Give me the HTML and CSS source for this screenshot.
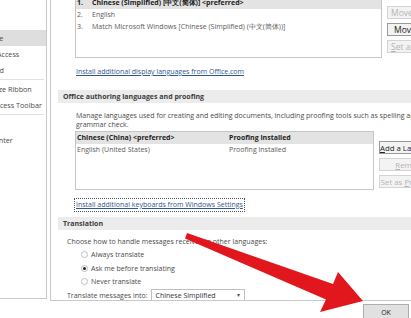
FILE: index.html
```html
<!DOCTYPE html>
<html lang="en">
<head>
  <meta charset="UTF-8">
  <meta name="viewport" content="width=device-width, initial-scale=1.0">
  <title>Word Options - Language</title>
  <link rel="stylesheet" href="styles.css">
</head>
<body>
  <div class="dialog">
    <div class="main">
      <nav class="sidebar">
        <ul class="nav-list">
          <li>Proofing</li>
          <li>Save</li>
          <li class="active">Language</li>
          <li>Ease of Access</li>
          <li>Advanced</li>
          <li class="sep"></li>
          <li>Customize Ribbon</li>
          <li>Quick Access Toolbar</li>
          <li class="sep"></li>
          <li>Add-ins</li>
          <li>Trust Center</li>
        </ul>
      </nav>

      <section class="panel">
        <div class="scroll">
          <!-- display languages -->
          <div class="lang-row">
            <div class="lang-list display-list">
              <div class="lang-item selected"><span class="num">1.</span>Chinese (Simplified) [中文(简体)] &lt;preferred&gt;</div>
              <div class="lang-item"><span class="num">2.</span>English</div>
              <div class="lang-item"><span class="num">3.</span>Match Microsoft Windows [Chinese (Simplified) (中文(简体))]</div>
            </div>
            <div class="side-buttons top-buttons">
              <button class="btn" disabled>Move Up</button>
              <button class="btn">Move Down</button>
              <button class="btn" disabled><u>S</u>et as Preferred</button>
            </div>
          </div>
          <a class="link link-office" href="#">Install additional display languages from Office.com</a>

          <!-- authoring languages -->
          <div class="band band-authoring">Office authoring languages and proofing</div>
          <p class="note">Manage languages used for creating and editing documents, including proofing tools such as spelling and<br>grammar check.</p>
          <div class="lang-row">
            <div class="lang-list authoring-list">
              <div class="lang-item selected"><span class="col-lang">Chinese (China) &lt;preferred&gt;</span>Proofing installed</div>
              <div class="lang-item"><span class="col-lang">English (United States)</span>Proofing installed</div>
            </div>
            <div class="side-buttons auth-buttons">
              <button class="btn"><u>A</u>dd a Language...</button>
              <button class="btn" disabled><u>R</u>emove</button>
              <button class="btn" disabled>Set as <u>P</u>referred</button>
            </div>
          </div>
          <a class="link link-keyboards" href="#">Install additional keyboards from Windows Settings</a>

          <!-- translation -->
          <div class="band band-translation">Translation</div>
          <p class="choose">Choose how to handle messages received in other languages:</p>
          <div class="radios">
            <label class="radio"><span class="dot"></span>Always translate</label>
            <label class="radio"><span class="dot checked"></span>Ask me before translating</label>
            <label class="radio"><span class="dot"></span>Never translate</label>
          </div>
          <div class="translate-into">
            <span>Translate messages into:</span>
            <div class="select">Chinese Simplified<span class="caret">▾</span></div>
          </div>
        </div>
      </section>
    </div>

    <div class="footer">
      <button class="btn-ok">OK</button>
    </div>

    <svg class="arrow" width="411" height="318" viewBox="0 0 411 318">
      <polygon points="187,233 333,284 338,272 363,301 320,312 326,299.5 185,238.5" fill="#e2171d"/>
    </svg>
  </div>
</body>
</html>
```

FILE: styles.css
```css
* {
  box-sizing: border-box;
}
body {
  margin: 0;
  width: 411px;
  height: 318px;
  overflow: hidden;
  background-color: #fff;
  font-family: "Open Sans", "Noto Sans", sans-serif;
  font-size: 7px;
  color: #4b4b4b;
}
.dialog {
  position: relative;
  width: 411px;
  height: 318px;
}
.main {
  display: flex;
  height: 301px;
}

/* left nav */
.sidebar {
  width: 47px;
  height: 299px;
  border-right: 1px solid #c9c9c9;
  border-bottom: 1px solid #c9c9c9;
  overflow: hidden;
  flex-shrink: 0;
}
.nav-list {
  list-style: none;
  margin: -2px 0 0 -29px;
  padding: 0;
  font-size: 7.2px;
}
.nav-list li {
  height: 16px;
  line-height: 16px;
  white-space: nowrap;
}
.nav-list li.active {
  background-color: #dedede;
}
.nav-list li.sep {
  height: 1px;
  margin: 1px 2px 1px 0;
  background-color: #e2e2e2;
}

/* right pane */
.panel {
  flex: 1;
  margin-left: 3px;
  height: 301px;
  border-left: 1px solid #c9c9c9;
  border-bottom: 1px solid #c9c9c9;
  overflow: hidden;
}
.scroll {
  margin-top: -4px;
}
.lang-row {
  display: flex;
  gap: 5px;
  margin-left: 24px;
}
.lang-list {
  border: 1px solid #c6c6c6;
  flex-shrink: 0;
}
.display-list {
  width: 307px;
  height: 62px;
}
.authoring-list {
  width: 299px;
  height: 59px;
}
.lang-item {
  display: flex;
  height: 12px;
  line-height: 12px;
  padding-left: 1px;
  white-space: nowrap;
  overflow: hidden;
  color: #5a5a5a;
}
.lang-item.selected {
  background-color: #e3e3e3;
  font-weight: bold;
  color: #222;
}
.num {
  width: 15px;
  flex-shrink: 0;
}
.col-lang {
  width: 152px;
  flex-shrink: 0;
}
.side-buttons {
  display: flex;
  flex-direction: column;
  gap: 4px;
}
.top-buttons {
  padding-top: 10px;
}
.auth-buttons {
  padding-top: 10px;
}
.btn {
  width: 62px;
  height: 13px;
  padding: 0 0 0 3px;
  border: 1px solid #d4d4d4;
  background-color: #f3f3f3;
  font-family: inherit;
  font-size: 7.8px;
  color: #222;
  text-align: left;
  white-space: nowrap;
  overflow: hidden;
}
.btn:disabled {
  color: #b3b3b3;
}
.top-buttons .btn {
  font-size: 8.5px;
}
.top-buttons .btn:nth-child(2) {
  border-color: #9a9a9a;
  padding-left: 6px;
}
.auth-buttons .btn {
  text-align: center;
  padding: 0;
}
.auth-buttons .btn:first-child {
  border-color: #9a9a9a;
}
.link {
  display: inline-block;
  color: #30578f;
  text-decoration: underline;
  line-height: 12px;
  white-space: nowrap;
}
.link-office {
  margin: 8px 0 0 25px;
}
.link-keyboards {
  margin: 9px 0 0 24px;
  padding: 0 1px;
  outline: 1px dotted #555;
}
.band {
  margin-left: 7px;
  height: 13px;
  line-height: 13px;
  padding-left: 5px;
  background-color: #ececec;
  font-weight: bold;
  color: #3c3c3c;
  white-space: nowrap;
}
.band-authoring {
  margin-top: 12px;
}
.band-translation {
  margin-top: 6px;
}
.note {
  margin: 8px 0 2px 25px;
  line-height: 9px;
  white-space: nowrap;
}
.choose {
  margin: 6px 0 0 16px;
  line-height: 12px;
  white-space: nowrap;
}
.radios {
  display: flex;
  flex-direction: column;
  margin-left: 30px;
}
.radio {
  display: flex;
  align-items: center;
  gap: 3px;
  height: 13.5px;
}
.dot {
  width: 7px;
  height: 7px;
  border: 1px solid #bdbdbd;
  border-radius: 50%;
  background-color: #fff;
  position: relative;
}
.dot.checked::after {
  content: "";
  position: absolute;
  left: 1px;
  top: 1px;
  width: 3px;
  height: 3px;
  border-radius: 50%;
  background-color: #222;
}
.translate-into {
  display: flex;
  align-items: center;
  gap: 3px;
  margin-left: 16px;
  height: 13px;
}
.select {
  display: flex;
  align-items: center;
  justify-content: space-between;
  width: 94px;
  height: 13px;
  padding: 0 4px;
  border: 1px solid #c0c0c0;
  color: #333;
}
.caret {
  font-size: 6px;
  color: #555;
}

/* footer */
.footer {
  display: flex;
  justify-content: flex-end;
  padding: 3px 2px 0 0;
}
.btn-ok {
  width: 46px;
  height: 17px;
  border: 1px solid #adadad;
  background-color: #e1e1e1;
  font-family: inherit;
  font-size: 7px;
  color: #222;
}

.arrow {
  position: absolute;
  left: 0;
  top: 0;
  pointer-events: none;
}
```
